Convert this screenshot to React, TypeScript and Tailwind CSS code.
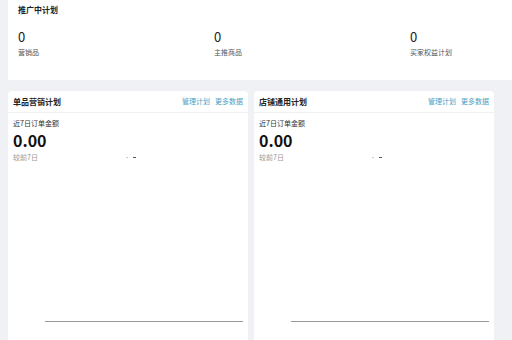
const font = { fontFamily: '"Noto Sans CJK SC", "Noto Sans", sans-serif' };

function Stat({ value, label }: { value: string; label: string }) {
  return (
    <div className="flex flex-col">
      <span className="text-[13px] leading-[16px] text-[#222]">{value}</span>
      <span className="mt-[2px] text-[7px] leading-[10px] text-[#555]">{label}</span>
    </div>
  );
}

function PlanCard({ title }: { title: string }) {
  return (
    <div className="flex h-[260px] w-[240px] flex-col rounded-[4px] bg-white">
      <div className="flex h-[22px] items-center justify-between border-b border-[#eef0f3] px-[5px]">
        <span className="text-[8px] font-bold text-[#222]">{title}</span>
        <div className="flex gap-[5px] text-[7px] text-[#4a9fc4]">
          <span>管理计划</span>
          <span>更多数据</span>
        </div>
      </div>
      <div className="flex flex-col px-[5px] pt-[4px]">
        <span className="text-[7px] leading-[12px] text-[#333]">近7日订单金额</span>
        <span className="mt-[1px] text-[16px] font-bold leading-[20px] text-[#111]">0.00</span>
        <div className="mt-[1px] flex items-center text-[7px] leading-[12px] text-[#999]">
          <span>较前7日</span>
          <span className="ml-[88px] h-[1px] w-[2px] bg-[#ccc]" />
          <span className="ml-[5px] h-[1px] w-[3px] bg-[#555]" />
        </div>
      </div>
      <div className="ml-[37px] mr-[5px] mt-[158px] border-t border-[#999]" />
    </div>
  );
}

export default function App() {
  return (
    <div className="h-[340px] w-[512px] overflow-hidden bg-[#f0f1f5]" style={font}>
      <div className="ml-2 h-[80px] w-[608px] bg-white pl-[10px] pt-[5px]">
        <div className="text-[8px] font-bold leading-[10px] text-[#222]">推广中计划</div>
        <div className="mt-[14px] grid w-[588px] grid-cols-3">
          <Stat value="0" label="营销品" />
          <Stat value="0" label="主推商品" />
          <Stat value="0" label="买家权益计划" />
        </div>
      </div>
      <div className="mt-[11px] flex gap-[6px] pl-2">
        <PlanCard title="单品营销计划" />
        <PlanCard title="店铺通用计划" />
      </div>
    </div>
  );
}
